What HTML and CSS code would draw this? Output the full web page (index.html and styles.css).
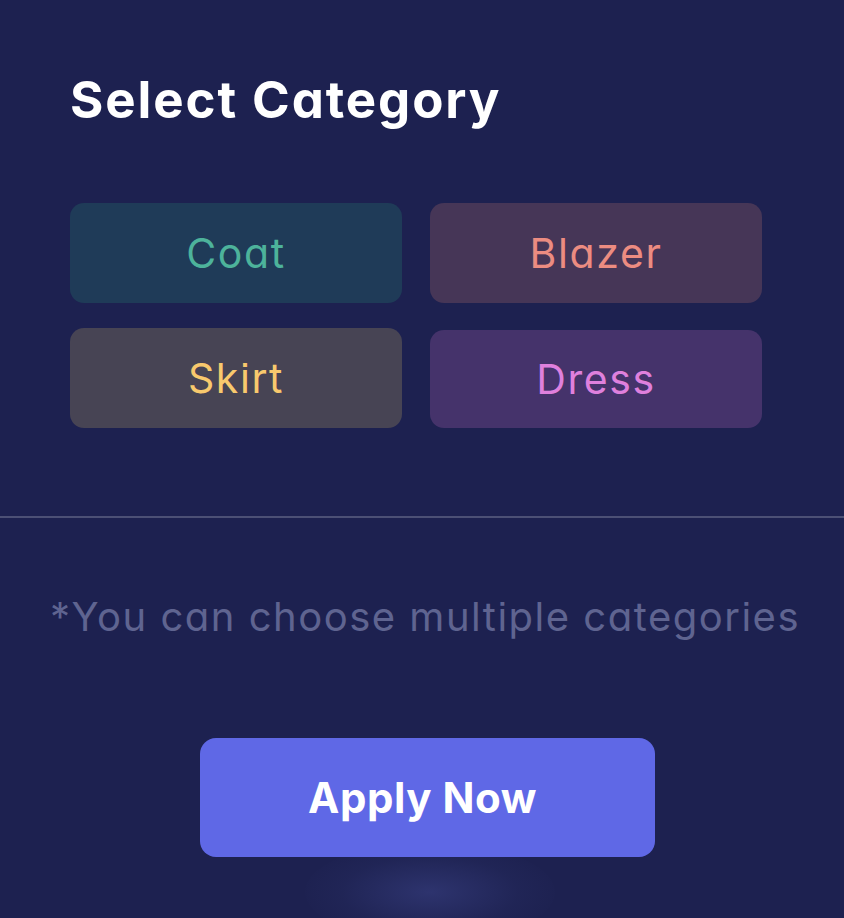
FILE: index.html
```html
<!DOCTYPE html>
<html lang="en">
<head>
<meta charset="UTF-8">
<meta name="viewport" content="width=device-width, initial-scale=1.0">
<title>Select Category</title>
<link rel="stylesheet" href="styles.css">
</head>
<body>
    <div class="sheet">
        <div class="top">
            <h1 class="title">Select Category</h1>
            <div class="chips">
                <button class="chip coat">Coat</button>
                <button class="chip blazer">Blazer</button>
                <button class="chip skirt">Skirt</button>
                <button class="chip dress">Dress</button>
            </div>
        </div>
        <div class="divider"></div>
        <p class="note">*You can choose multiple categories</p>
        <div class="actions">
            <button class="apply">Apply Now</button>
            <div class="glow"></div>
        </div>
    </div>
</body>
</html>
```

FILE: styles.css
```css
html, body{
    margin:0;
    padding:0;
    background:#1d2150;
}
.sheet{
    width:844px;
    height:918px;
    overflow:hidden;
    font-family:Inter, "Noto Sans", sans-serif;
    font-feature-settings:"cv11" 1, "ss07" 1;
}
.top{
    padding:70px 82px 0 70px;
}
.title{
    margin:0;
    font-size:51px;
    line-height:60px;
    font-weight:700;
    color:#ffffff;
    letter-spacing:1.9px;
}
.chips{
    display:grid;
    grid-template-columns:332px 332px;
    grid-auto-rows:100px;
    column-gap:28px;
    row-gap:25px;
    margin-top:73px;
}
.chip{
    border:none;
    border-radius:14px;
    font-family:inherit;
    font-feature-settings:inherit;
    font-size:41px;
    font-weight:400;
    letter-spacing:1.6px;
    padding:0;
}
.coat{ background:#1f3b58; color:#4db39b; }
.blazer{ background:#463657; color:#ec8c81; }
.skirt{ background:#474454; color:#f8c96d; }
.dress{ background:#45336b; color:#df80dd; margin-top:2px; }
.divider{
    height:2px;
    background:#4c5075;
    margin-top:88px;
}
.note{
    margin:74px 0 0;
    padding-left:6px;
    text-align:center;
    font-size:40px;
    line-height:50px;
    color:#5f6490;
    font-weight:400;
    letter-spacing:1.5px;
}
.actions{
    position:relative;
    display:flex;
    justify-content:center;
    margin-top:96px;
    padding-left:11px;
}
.apply{
    position:relative;
    z-index:1;
    width:455px;
    height:119px;
    padding:0 10px 0 0;
    border:none;
    border-radius:16px;
    background:#5f68e6;
    color:#ffffff;
    font-family:inherit;
    font-size:42px;
    font-weight:700;
    letter-spacing:0.5px;
}
.glow{
    position:absolute;
    left:305px;
    top:104px;
    width:250px;
    height:100px;
    border-radius:50%;
    background:radial-gradient(ellipse at center, rgba(62,70,140,0.5) 0%, rgba(40,46,100,0.3) 50%, rgba(29,33,80,0) 75%);
}
```
